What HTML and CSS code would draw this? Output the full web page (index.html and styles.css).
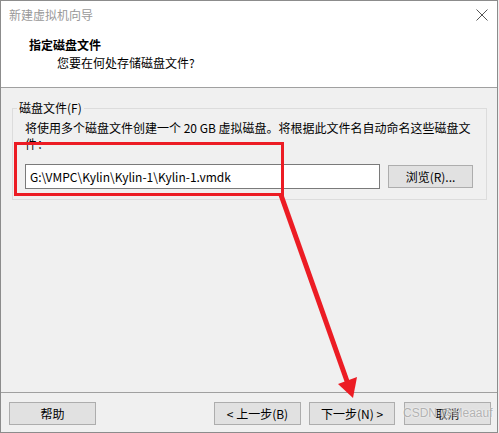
FILE: index.html
```html
<!DOCTYPE html>
<html lang="zh-CN">
<head>
<meta charset="utf-8">
<title>新建虚拟机向导</title>
<link rel="stylesheet" href="styles.css">
</head>
<body>
<div class="window">
  <div class="top">
    <div class="titlebar">
      <span class="title">新建虚拟机向导</span>
      <svg class="close" width="12" height="12" viewBox="0 0 12 12"><path d="M0.5 0.5 L11.5 11.5 M11.5 0.5 L0.5 11.5" stroke="#555" stroke-width="1" fill="none"/></svg>
    </div>
    <div class="header">
      <div class="h-title">指定磁盘文件</div>
      <div class="h-sub">您要在何处存储磁盘文件?</div>
    </div>
  </div>
  <div class="body">
    <fieldset class="group">
      <legend>磁盘文件(F)</legend>
      <p class="desc">将使用多个磁盘文件创建一个 20 GB 虚拟磁盘。将根据此文件名自动命名这些磁盘文<br>件：</p>
      <div class="row">
        <div class="input">G:\VMPC\Kylin\Kylin-1\Kylin-1.vmdk</div>
        <div class="btn browse">浏览(R)...</div>
      </div>
    </fieldset>
  </div>
  <div class="footer">
    <div class="btn w87">帮助</div>
    <div class="spacer"></div>
    <div class="btn w87">&lt; 上一步(B)</div>
    <div class="btn w86">下一步(N) &gt;</div>
    <div class="btn w87">取消</div>
  </div>
  <svg class="annot" width="498" height="433" viewBox="0 0 498 433">
    <rect x="15.5" y="143.5" width="267" height="51" fill="none" stroke="#ec1c24" stroke-width="3"/>
    <line x1="281" y1="195" x2="348" y2="384" stroke="#ec1c24" stroke-width="5"/>
    <polygon points="353,398 338,384 357,377" fill="#ec1c24"/>
  </svg>
  <span class="watermark">CSDN @Meaauf</span>
</div>
</body>
</html>
```

FILE: styles.css
```css
html, body {
  margin: 0;
  padding: 0;
  background: #f0f0f0;
}
.window {
  position: relative;
  width: 498px;
  height: 433px;
  box-sizing: border-box;
  border: 1px solid #8c8c8c;
  background: #f0f0f0;
  display: flex;
  flex-direction: column;
  font-family: "Noto Sans CJK SC", "Liberation Sans", sans-serif;
  font-size: 12px;
  color: #000;
}
.top {
  background: #fff;
  height: 86px;
  border-bottom: 1px solid #a0a0a0;
  flex: none;
}
.titlebar {
  height: 28px;
  display: flex;
  align-items: center;
  justify-content: space-between;
  padding: 0 8px 0 8px;
}
.title {
  color: #999;
  line-height: 28px;
}
.close {
  display: block;
  margin-right: 1px;
}
.header {
  padding-left: 28px;
  padding-top: 8px;
}
.h-title {
  font-weight: bold;
  line-height: 16px;
}
.h-sub {
  line-height: 16px;
  margin-top: 2px;
  padding-left: 28px;
}
.body {
  flex: 1;
}
.group {
  margin: 12px 10px 0 11px;
  padding: 0 12px 10px 12px;
  border: 1px solid #dcdcdc;
  min-width: 0;
}
.group legend {
  margin-left: -8px;
  padding: 0 2px;
  line-height: 16px;
}
.desc {
  margin: 4px 0 0 0;
  line-height: 16px;
  white-space: nowrap;
}
.row {
  display: flex;
  align-items: center;
  gap: 8px;
  margin-top: 12px;
}
.input {
  width: 355px;
  height: 25px;
  box-sizing: border-box;
  border: 1px solid #7a7a7a;
  background: #fff;
  padding-left: 4px;
  line-height: 23px;
  font-family: "Noto Sans CJK SC", "Liberation Sans", sans-serif;
}
.btn {
  height: 23px;
  box-sizing: border-box;
  border: 1px solid #adadad;
  background: #e1e1e1;
  display: flex;
  align-items: center;
  justify-content: center;
  line-height: 21px;
  white-space: nowrap;
}
.browse {
  width: 85px;
}
.footer {
  flex: none;
  height: 40px;
  box-sizing: border-box;
  border-top: 1px solid #a0a0a0;
  display: flex;
  align-items: flex-start;
  gap: 8px;
  padding: 9px 6px 0 8px;
}
.spacer {
  flex: 1;
}
.w87 { width: 87px; }
.w86 { width: 86px; }
.footer .btn:last-child { margin-left: 1px; }
.annot {
  position: absolute;
  left: -1px;
  top: -1px;
  pointer-events: none;
}
.watermark {
  position: absolute;
  left: 402px;
  top: 404px;
  white-space: nowrap;
  font-family: "Liberation Sans", sans-serif;
  font-size: 12px;
  color: rgba(150, 150, 150, 0.7);
  text-shadow: 0 0 2px #fff;
  line-height: 16px;
}
```
